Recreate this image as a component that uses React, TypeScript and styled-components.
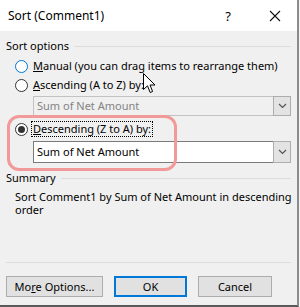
import React from "react";
import styled, { createGlobalStyle } from "styled-components";

const Global = createGlobalStyle`
  html, body { margin: 0; padding: 0; background: #f3f3f3; }
  * { box-sizing: border-box; }
`;

const Frame = styled.div`
  width: 300px;
  height: 307px;
  position: relative;
  overflow: hidden;
  font-family: "Noto Sans", "Segoe UI", sans-serif;
  font-size: 11px;
  color: #000;
`;

const Dialog = styled.div`
  width: 299px;
  height: 307px;
  border-right: 2px solid #8c8c8c;
  border-bottom: 2px solid #5a5a5a;
  display: flex;
  flex-direction: column;
  background: #f0f0f0;
`;

const TitleBar = styled.div`
  height: 31px;
  background: #fff;
  display: flex;
  align-items: center;
  padding-left: 8px;
  flex-shrink: 0;
`;

const Title = styled.div`
  flex: 1;
  font-size: 12px;
  line-height: 16px;
`;

const HelpGlyph = styled.div`
  width: 20px;
  text-align: center;
  font-size: 13px;
  margin-right: 30px;
`;

const CloseBox = styled.div`
  width: 14px;
  height: 14px;
  margin-right: 15px;
  display: flex;
  align-items: center;
  justify-content: center;
`;

const Body = styled.div`
  flex: 1;
  display: flex;
  flex-direction: column;
  padding: 7px 6px 0 6px;
`;

const GroupHeader = styled.div<{ $top?: number }>`
  display: flex;
  align-items: center;
  gap: 5px;
  height: 16px;
  margin-top: ${(p) => p.$top ?? 0}px;
  line-height: 16px;
  &::after {
    content: "";
    flex: 1;
    height: 1px;
    background: #dcdcdc;
  }
`;

const RadioRow = styled.div<{ $top: number }>`
  display: flex;
  align-items: center;
  height: 16px;
  margin-top: ${(p) => p.$top}px;
  padding-left: 9px;
  gap: 4px;
`;

const RadioCircle = styled.span<{ $checked?: boolean; $hot?: boolean }>`
  width: 13px;
  height: 13px;
  border-radius: 50%;
  border: 1px solid ${(p) => (p.$hot ? "#0078d7" : "#333")};
  background: #fff;
  display: flex;
  align-items: center;
  justify-content: center;
  flex-shrink: 0;
  &::after {
    content: "";
    display: ${(p) => (p.$checked ? "block" : "none")};
    width: 7px;
    height: 7px;
    border-radius: 50%;
    background: #333;
  }
`;

const RadioLabel = styled.span<{ $focus?: boolean }>`
  line-height: 14px;
  padding: 0 1px;
  outline: ${(p) => (p.$focus ? "1px dotted #000" : "none")};
  white-space: nowrap;
`;

const Select = styled.div<{ $disabled?: boolean; $top: number }>`
  margin-top: ${(p) => p.$top}px;
  margin-left: 27px;
  height: ${(p) => (p.$disabled ? 20 : 22)}px;
  border: 1px solid ${(p) => (p.$disabled ? "#c2c2c2" : "#7a7a7a")};
  background: ${(p) => (p.$disabled ? "#f0f0f0" : "#fff")};
  color: ${(p) => (p.$disabled ? "#838383" : "#000")};
  display: flex;
  align-items: center;
  padding-left: 3px;
`;

const SelectText = styled.span`
  flex: 1;
  line-height: 16px;
`;

const ArrowBox = styled.span`
  width: 18px;
  align-self: stretch;
  margin: -1px -1px -1px 0;
  border: 1px solid #adadad;
  background: #e3e3e3;
  display: flex;
  align-items: center;
  justify-content: center;
`;

const SummaryText = styled.div`
  margin-top: 4px;
  padding-left: 9px;
  line-height: 13px;
  width: 292px;
`;

const Spacer = styled.div`
  flex: 1;
`;

const Separator = styled.div`
  height: 1px;
  background: #dcdcdc;
`;

const ButtonRow = styled.div`
  display: flex;
  gap: 11px;
  margin-top: 13px;
  margin-bottom: 8px;
`;

const Button = styled.div<{ $w: number; $default?: boolean }>`
  width: ${(p) => p.$w}px;
  height: 21px;
  background: #e1e1e1;
  border: ${(p) => (p.$default ? "2px solid #0078d7" : "1px solid #adadad")};
  display: flex;
  align-items: center;
  justify-content: center;
  line-height: 16px;
`;

const Highlight = styled.div`
  position: absolute;
  left: 7px;
  top: 115px;
  width: 170px;
  height: 56px;
  border: 3px solid #f29a9a;
  border-radius: 12px;
  pointer-events: none;
`;

const Cursor = styled.svg`
  position: absolute;
  left: 143px;
  top: 73px;
`;

const Chevron = () => (
  <svg width="9" height="6" viewBox="0 0 9 6">
    <path d="M1 1 L4.5 4.5 L8 1" fill="none" stroke="#555" strokeWidth="1.2" />
  </svg>
);

export default function App() {
  return (
    <>
      <Global />
      <Frame>
        <Dialog>
          <TitleBar>
            <Title>Sort (Comment1)</Title>
            <HelpGlyph>?</HelpGlyph>
            <CloseBox>
              <svg width="12" height="12" viewBox="0 0 12 12">
                <path d="M1 1 L11 11 M11 1 L1 11" stroke="#111" strokeWidth="1.1" />
              </svg>
            </CloseBox>
          </TitleBar>
          <Body>
            <GroupHeader $top={0}>Sort options</GroupHeader>
            <RadioRow $top={4}>
              <RadioCircle $hot />
              <RadioLabel>
                <u>M</u>anual (you can drag items to rearrange them)
              </RadioLabel>
            </RadioRow>
            <RadioRow $top={3}>
              <RadioCircle />
              <RadioLabel>
                <u>A</u>scending (A to Z) by:
              </RadioLabel>
            </RadioRow>
            <Select $disabled $top={3}>
              <SelectText>Sum of Net Amount</SelectText>
              <ArrowBox>
                <Chevron />
              </ArrowBox>
            </Select>
            <RadioRow $top={5}>
              <RadioCircle $checked />
              <RadioLabel $focus>
                <u>D</u>escending (Z to A) by:
              </RadioLabel>
            </RadioRow>
            <Select $top={4}>
              <SelectText>Sum of Net Amount</SelectText>
              <ArrowBox>
                <Chevron />
              </ArrowBox>
            </Select>
            <GroupHeader $top={7}>Summary</GroupHeader>
            <SummaryText>
              Sort Comment1 by Sum of Net Amount in descending order
            </SummaryText>
            <Spacer />
            <Separator />
            <ButtonRow>
              <Button $w={97}>
                <span>
                  Mo<u>r</u>e Options...
                </span>
              </Button>
              <Button $w={73} $default>
                OK
              </Button>
              <Button $w={74}>Cancel</Button>
            </ButtonRow>
          </Body>
        </Dialog>
        <Highlight />
        <Cursor width="13" height="22" viewBox="0 0 13 22">
          <path
            d="M0.5 0.5 L0.5 16.5 L4.5 12.8 L7.2 19.5 L9.6 18.5 L7 12 L12 12 Z"
            fill="#fff"
            stroke="#000"
            strokeWidth="1"
            strokeLinejoin="round"
          />
        </Cursor>
      </Frame>
    </>
  );
}
